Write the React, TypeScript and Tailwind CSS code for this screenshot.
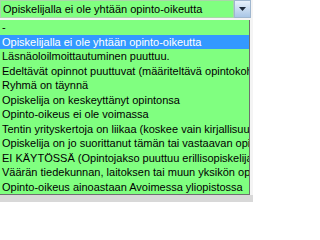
const options = [
  "-",
  "Opiskelijalla ei ole yhtään opinto-oikeutta",
  "Läsnäoloilmoittautuminen puuttuu.",
  "Edeltävät opinnot puuttuvat (määriteltävä opintokohtaisesti)",
  "Ryhmä on täynnä",
  "Opiskelija on keskeyttänyt opintonsa",
  "Opinto-oikeus ei ole voimassa",
  "Tentin yrityskertoja on liikaa (koskee vain kirjallisuustenttejä)",
  "Opiskelija on jo suorittanut tämän tai vastaavan opintojakson",
  "EI KÄYTÖSSÄ (Opintojakso puuttuu erillisopiskelijan opinto-oikeudesta)",
  "Väärän tiedekunnan, laitoksen tai muun yksikön opiskelija",
  "Opinto-oikeus ainoastaan Avoimessa yliopistossa",
];

export default function App() {
  const selected = 1;
  return (
    <div className="w-[253px] h-[202px] overflow-hidden bg-[#d8d8d8] font-['Liberation_Sans',Arial,sans-serif] text-[11px] text-black">
      <div className="flex h-[20px] bg-[#f4f4f4] pb-[2px]">
        <div className="flex min-w-0 flex-1 items-center whitespace-nowrap overflow-hidden border border-[#a8d8a8] bg-[#80ff80] pl-[2px] leading-none">
          Opiskelijalla ei ole yhtään opinto-oikeutta
        </div>
        <div className="flex w-[17px] items-center justify-center border border-[#9fb6cf] bg-gradient-to-b from-[#e8f1fb] to-[#a9c6e6]">
          <svg width="7" height="4" viewBox="0 0 7 4">
            <path d="M0 0h7L3.5 4z" fill="#1e2a3a" />
          </svg>
        </div>
        <div className="w-[2px] bg-[#f4f4f4]" />
      </div>
      <div className="flex">
        <ul className="w-[250px] border-r border-b border-[#6f6f6f] bg-[#80ff80]">
          {options.map((o, i) => (
            <li
              key={i}
              className={`h-[14.5px] whitespace-nowrap overflow-hidden pl-[2px] leading-[14.5px] ${
                i === selected ? "bg-[#3399ff] text-white" : ""
              }`}
            >
              {o}
            </li>
          ))}
        </ul>
        <div className="flex-1 bg-[#f4f4f4]" />
      </div>
    </div>
  );
}
